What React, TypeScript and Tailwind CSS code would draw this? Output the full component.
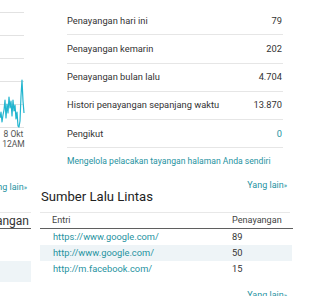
import React from "react";

const stats = [
  { label: "Penayangan hari ini", value: "79" },
  { label: "Penayangan kemarin", value: "202" },
  { label: "Penayangan bulan lalu", value: "4.704" },
  { label: "Histori penayangan sepanjang waktu", value: "13.870" },
  { label: "Pengikut", value: "0", link: true },
];

const sources = [
  { url: "https://www.google.com/", views: 89 },
  { url: "http://www.google.com/", views: 50 },
  { url: "http://m.facebook.com/", views: 15 },
];

const chartPoints =
  "0,118 1,112 2,122 3,115 4,110 5,100 6,118 7,104 8,113 9,97 10,108 11,101 12,116 13,100 14,111 15,105 16,119 17,112 18,126 19,127 20,121 21,96 22,80 23,101 24,113";

function MoreLink({ size = "text-[9px]" }: { size?: string }) {
  return (
    <span className={`text-[#1f939f] ${size} whitespace-nowrap`}>
      Yang lain<span className="text-[7px]">»</span>
    </span>
  );
}

function Chart() {
  return (
    <div className="w-[25px] shrink-0">
      <svg width="25" height="128" viewBox="0 0 25 128">
        {[12, 35, 58, 81, 104, 127].map((y) => (
          <line key={y} x1="0" x2="24" y1={y + 0.5} y2={y + 0.5} stroke="#e2e2e2" strokeWidth="1" />
        ))}
        <polyline points={chartPoints} fill="none" stroke="#22b5cf" strokeWidth="1.2" strokeLinejoin="round" />
      </svg>
      <div className="flex flex-col items-center text-[8.5px] leading-[10px] text-[#555] mt-[1px] pl-[2px]">
        <span>8 Okt</span>
        <span>12AM</span>
      </div>
    </div>
  );
}

export default function App() {
  return (
    <div className="w-[320px] h-[296px] overflow-hidden bg-white text-[#333] font-['Roboto','Liberation_Sans',sans-serif]">
      <div className="flex">
        <Chart />
        <div className="ml-[42px] w-[216px] mt-[7px]">
          {stats.map((s) => (
            <div
              key={s.label}
              className="h-[28.25px] flex items-center justify-between border-b border-[#e6e6e6] text-[9.3px] pr-[1px]"
            >
              <span>{s.label}</span>
              <span className={s.link ? "text-[#1f939f]" : ""}>{s.value}</span>
            </div>
          ))}
          <div className="h-[25.75px] flex items-center text-[8.6px] text-[#1f939f] whitespace-nowrap">
            Mengelola pelacakan tayangan halaman Anda sendiri
          </div>
        </div>
      </div>

      <div className="flex">
        {/* left column, mostly cut off by the viewport */}
        <div className="w-[31px] shrink-0 overflow-hidden">
          <div className="w-[100px] -ml-[69px] mt-[6px] h-[10px] leading-[10px] text-right pr-[4px]">
            <MoreLink />
          </div>
          <div className="h-[14px]" />
          <div className="mt-[8px] border-t border-[#e8e8e8]">
            <div className="w-[100px] -ml-[69px] h-[16px] leading-[16px] text-right border-b border-[#5f5f5f] text-[12px] pr-[2px] whitespace-nowrap">
              Penayangan
            </div>
            <div className="h-[32px]" />
            <div className="h-[21px] bg-[#eef4f7]" />
          </div>
        </div>

        <div className="ml-[9px] w-[253px]">
          <div className="mt-[6px] h-[10px] leading-[10px] flex justify-end pr-[6px]">
            <MoreLink />
          </div>
          <h2 className="h-[14px] leading-[14px] text-[13.1px] text-[#222] pl-[1px]">Sumber Lalu Lintas</h2>
          <div className="mt-[8px] border-t border-[#e8e8e8] mr-[3px]">
            <div className="h-[16px] -mr-[3px] grid grid-cols-[192px_1fr] items-center border-b border-[#5f5f5f] text-[9.1px] text-[#444]">
              <span className="pl-[12px]">Entri</span>
              <span>Penayangan</span>
            </div>
          </div>
          {sources.map((r, i) => (
            <div
              key={r.url}
              className={`h-[16px] grid grid-cols-[192px_1fr] items-center text-[9.3px] mr-[1px] ${i === 1 ? "bg-[#eef4f7]" : ""}`}
            >
              <span className="pl-[13px] text-[#1f939f]">{r.url}</span>
              <span className="text-[#333]">{r.views}</span>
            </div>
          ))}
          <div className="mt-[13px] h-[10px] leading-[10px] flex justify-end pr-[6px]">
            <MoreLink />
          </div>
        </div>
      </div>
    </div>
  );
}
